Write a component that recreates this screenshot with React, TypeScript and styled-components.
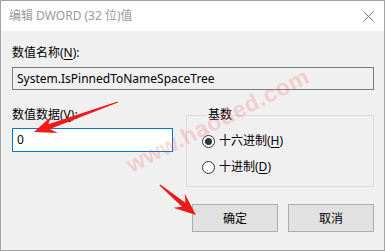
import React from "react";
import styled, { createGlobalStyle } from "styled-components";

const FONT = `"Noto Sans", "Noto Sans CJK SC", sans-serif`;

const GlobalStyle = createGlobalStyle`
  html, body {
    margin: 0;
    padding: 0;
    background: #ffffff;
  }
  body {
    font-family: ${FONT};
  }
`;

const Window = styled.div`
  position: relative;
  box-sizing: border-box;
  width: 385px;
  height: 251px;
  border: 1px solid #a3a3a3;
  background: #f0f0f0;
  display: flex;
  flex-direction: column;
  overflow: hidden;
  font-family: ${FONT};
  font-size: 12px;
  color: #000;
`;

const TitleBar = styled.div`
  height: 30px;
  flex: none;
  background: #ffffff;
  display: flex;
  align-items: center;
  justify-content: space-between;
  padding: 0 10px 0 8px;
`;

const TitleText = styled.span`
  color: #9a9a9a;
  font-size: 12px;
  line-height: 16px;
`;

const Body = styled.div`
  display: flex;
  flex-direction: column;
  padding: 0 10px 0 11px;
`;

const FieldLabel = styled.div<{ $top: number }>`
  margin-top: ${(p) => p.$top}px;
  line-height: 16px;
  height: 16px;
`;

const Key = styled.span`
  text-decoration: underline;
  text-underline-offset: 2px;
`;

const TextBox = styled.div<{ $active?: boolean }>`
  box-sizing: border-box;
  height: ${(p) => (p.$active ? 24 : 23)}px;
  margin-top: ${(p) => (p.$active ? 5 : 6)}px;
  border: 1px solid ${(p) => (p.$active ? "#0078d7" : "#7a7a7a")};
  background: ${(p) => (p.$active ? "#ffffff" : "#f0f0f0")};
  padding: 0 4px;
  display: flex;
  align-items: center;
  line-height: 16px;
  white-space: nowrap;
`;

const Row = styled.div`
  display: flex;
  gap: 13px;
`;

const LeftColumn = styled.div`
  width: 161px;
  display: flex;
  flex-direction: column;
`;

const GroupBox = styled.fieldset`
  flex: 1;
  margin: 17px 0 0 0;
  padding: 0 0 0 15px;
  height: 80px;
  box-sizing: border-box;
  border: 1px solid #dcdcdc;
  min-width: 0;
`;

const Legend = styled.legend`
  padding: 0 1px;
  margin-left: 5px;
  line-height: 16px;
`;

const RadioList = styled.div`
  display: flex;
  flex-direction: column;
  gap: 10px;
  padding-top: 10px;
`;

const RadioRow = styled.label`
  display: flex;
  align-items: center;
  gap: 4px;
  line-height: 16px;
  height: 16px;
`;

const RadioCircle = styled.span<{ $checked?: boolean }>`
  box-sizing: border-box;
  width: 13px;
  height: 13px;
  border-radius: 50%;
  border: 1px solid #333333;
  background: #ffffff;
  display: flex;
  align-items: center;
  justify-content: center;
  &::after {
    content: "";
    width: 7px;
    height: 7px;
    border-radius: 50%;
    background: ${(p) => (p.$checked ? "#333333" : "transparent")};
  }
`;

const ButtonRow = styled.div`
  display: flex;
  justify-content: flex-end;
  gap: 10px;
  margin-top: 17px;
`;

const DialogButton = styled.button`
  box-sizing: border-box;
  width: 86px;
  height: 28px;
  border: 1px solid #adadad;
  background: #e1e1e1;
  font-family: ${FONT};
  font-size: 12px;
  color: #000;
  padding: 0;
`;

const Overlay = styled.svg`
  position: absolute;
  left: -1px;
  top: -1px;
  width: 385px;
  height: 251px;
  pointer-events: none;
`;

const Watermark = styled.div`
  position: absolute;
  left: 127px;
  top: 152px;
  transform: rotate(-27deg);
  transform-origin: left center;
  color: rgba(240, 60, 60, 0.2);
  font-family: "Liberation Sans", sans-serif;
  font-weight: bold;
  font-size: 23px;
  letter-spacing: 0.5px;
  pointer-events: none;
  white-space: nowrap;
`;

// arrow pointing along +x, tip at origin
const ARROW = "0,0 -22,-9 -16,-2.6 -L,-0.6 -L,0.6 -16,2.6 -22,9";

const Arrow: React.FC<{ x: number; y: number; angle: number; length: number }> = ({
  x,
  y,
  angle,
  length,
}) => (
  <polygon
    points={ARROW.replace(/L/g, String(length))}
    fill="#f01818"
    transform={`translate(${x} ${y}) rotate(${angle})`}
  />
);

const App: React.FC = () => {
  return (
    <>
      <GlobalStyle />
      <Window>
        <TitleBar>
          <TitleText>编辑 DWORD (32 位)值</TitleText>
          <svg width="11" height="11" viewBox="0 0 11 11">
            <path d="M0.5 0.5 L10.5 10.5 M10.5 0.5 L0.5 10.5" stroke="#7a7a7a" strokeWidth="1" />
          </svg>
        </TitleBar>
        <Body>
          <FieldLabel $top={14}>
            数值名称(<Key>N</Key>):
          </FieldLabel>
          <TextBox>System.IsPinnedToNameSpaceTree</TextBox>
          <Row>
            <LeftColumn>
              <FieldLabel $top={17}>
                数值数据(<Key>V</Key>):
              </FieldLabel>
              <TextBox $active>0</TextBox>
            </LeftColumn>
            <GroupBox>
              <Legend>基数</Legend>
              <RadioList>
                <RadioRow>
                  <RadioCircle $checked />
                  <span>
                    十六进制(<Key>H</Key>)
                  </span>
                </RadioRow>
                <RadioRow>
                  <RadioCircle />
                  <span>
                    十进制(<Key>D</Key>)
                  </span>
                </RadioRow>
              </RadioList>
            </GroupBox>
          </Row>
          <ButtonRow>
            <DialogButton>确定</DialogButton>
            <DialogButton>取消</DialogButton>
          </ButtonRow>
        </Body>
        <Watermark>www.haoded.com</Watermark>
        <Overlay viewBox="0 0 385 251">
          <Arrow x={34} y={132} angle={160.3} length={89} />
          <Arrow x={196} y={215} angle={39.8} length={47} />
        </Overlay>
      </Window>
    </>
  );
};

export default App;
